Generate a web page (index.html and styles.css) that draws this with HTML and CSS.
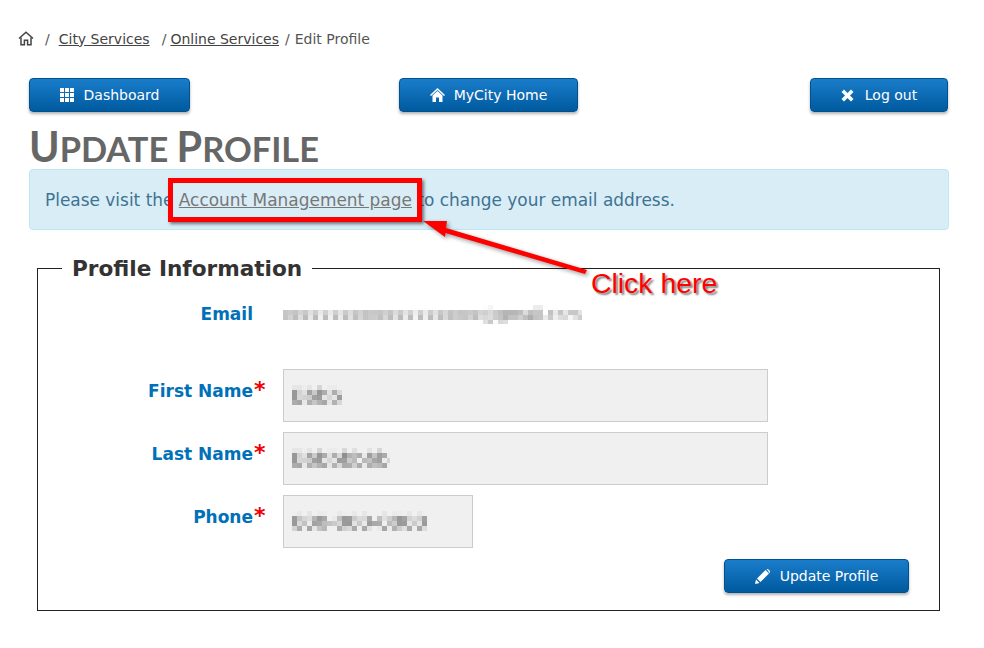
FILE: index.html
```html
<!DOCTYPE html>
<html lang="en">
<head>
  <meta charset="UTF-8">
  <meta name="viewport" content="width=device-width, initial-scale=1.0">
  <title>Update Profile</title>
  <link rel="stylesheet" href="styles.css">
</head>
<body>

  <!-- pixelates the hidden values -->
  <svg class="defs" width="0" height="0">
    <filter id="mosaic" x="0" y="0" width="1" height="1">
      <feGaussianBlur in="SourceGraphic" stdDeviation="1.2" result="soft"/>
      <feFlood x="2" y="2" width="1" height="1"/>
      <feComposite width="5" height="5"/>
      <feTile result="grid"/>
      <feComposite in="soft" in2="grid" operator="in"/>
      <feMorphology operator="dilate" radius="2"/>
    </filter>
  </svg>

  <nav class="breadcrumb">
    <svg class="crumb-home" width="16" height="15" viewBox="0 0 16 15" fill="none" stroke="#444" stroke-width="1.5">
      <path d="M1 7.5 8 1.2l7 6.3"/>
      <path d="M3 6.5v7.3h3.4V9.2h3.2v4.6H13V6.5"/>
    </svg>
    <span class="sep sep-first">/</span>
    <a href="#">City Services</a>
    <span class="sep sep-second">/</span><a href="#">Online Services</a>
    <span class="sep sep-third">/</span><span>Edit Profile</span>
  </nav>

  <div class="top-buttons">
    <a class="btn btn-dashboard" href="#">
      <svg width="14" height="14" viewBox="0 0 14 14" fill="#fff">
        <rect x="0" y="0" width="4" height="4"/><rect x="5" y="0" width="4" height="4"/><rect x="10" y="0" width="4" height="4"/>
        <rect x="0" y="5" width="4" height="4"/><rect x="5" y="5" width="4" height="4"/><rect x="10" y="5" width="4" height="4"/>
        <rect x="0" y="10" width="4" height="4"/><rect x="5" y="10" width="4" height="4"/><rect x="10" y="10" width="4" height="4"/>
      </svg>
      Dashboard
    </a>
    <a class="btn btn-home" href="#">
      <svg width="15" height="14" viewBox="0 0 15 14" fill="#fff">
        <path d="M7.500 0 15 7l-1 1.100-6.500-6-6.500 6L0 7z"/>
        <path d="M2.500 7.500 7.500 3l5 4.500V14H9V9.500H6V14H2.500z"/>
      </svg>
      MyCity Home
    </a>
    <a class="btn btn-logout" href="#">
      <svg width="13" height="13" viewBox="0 0 13 13" fill="#fff">
        <path d="M3 .5 6.500 4 10 .5 12.500 3 9 6.500l3.500 3.500-2.500 2.500L6.500 9 3 12.500.5 10 4 6.500.5 3z"/>
      </svg>
      Log out
    </a>
  </div>

  <h1 class="page-title"><span class="cap">U</span>pdate <span class="cap">P</span>rofile</h1>

  <div class="alert">
    Please visit the <a href="#">Account Management page</a> to change your email address.
  </div>

  <fieldset class="profile">
    <legend>Profile Information</legend>

    <div class="row row-email">
      <label>Email</label>
      <span class="blurred blurred-email">xxxxxxxxxxxxxxxxxxxxx@gmail.com</span>
    </div>

    <div class="row">
      <label>First Name<span class="star">*</span></label>
      <div class="field"><span class="blurred">Bbbb</span></div>
    </div>

    <div class="row">
      <label>Last Name<span class="star">*</span></label>
      <div class="field"><span class="blurred">Bbbbbbbb</span></div>
    </div>

    <div class="row">
      <label>Phone<span class="star">*</span></label>
      <div class="field field-short"><span class="blurred">000-000-0000</span></div>
    </div>

    <div class="form-actions">
      <a class="btn btn-update" href="#">
        <svg width="16" height="15" viewBox="0 0 16 15" fill="#fff">
          <path d="M0 15l1-4.500 3.500 3.500z"/>
          <path d="M2 9.500 10.500 1l3.500 3.500L5.500 13z"/>
          <path d="M11.500 0 13 0l2 2 0 1.500-.5.500L12 .5z"/>
        </svg>
        Update Profile
      </a>
    </div>
  </fieldset>

  <!-- red markup drawn on top of the screenshot -->
  <div class="mark-box"></div>
  <svg class="mark-arrow" width="180" height="70" viewBox="0 0 180 70">
    <path d="M1 2 25 2 24 9 165 51 163 55 23.500 14 23 18z" fill="#f00"/>
  </svg>
  <div class="mark-text">Click here</div>

</body>
</html>
```
FILE: styles.css
```css
* {
  box-sizing: border-box;
}

body {
  margin: 0;
  padding: 0 35px 0 29px;
  font-family: "DejaVu Sans", Verdana, sans-serif;
  background-color: #fff;
  color: #555;
}

a {
  color: inherit;
}

.defs {
  position: absolute;
}

/* Breadcrumb */
.breadcrumb {
  display: flex;
  align-items: center;
  height: 17px;
  margin: 30px 0 0 -11px;
  font-size: 14px;
  white-space: pre;
}

.breadcrumb a {
  color: #444;
}

.crumb-home {
  margin-right: 11px;
}

.sep-first {
  margin-right: 9px;
}

.sep-second {
  margin: 0 4px 0 12px;
}

.sep-third {
  margin: 0 5px 0 6px;
}

/* Buttons */
.top-buttons {
  display: flex;
  justify-content: space-between;
  margin: 31px 0 0;
  padding-right: 1px;
}

.btn {
  display: inline-flex;
  align-items: center;
  justify-content: center;
  height: 34px;
  border: 1px solid #00528f;
  border-radius: 4px;
  background: linear-gradient(#1a7dcb, #005a9e);
  box-shadow: 0 2px 3px rgba(0, 0, 0, 0.3);
  color: #fff;
  font-size: 14px;
  text-decoration: none;
}

.btn-dashboard {
  width: 161px;
  gap: 10px;
}

.btn-home {
  width: 179px;
  gap: 9px;
  margin-right: 23px;
}

.btn-logout {
  width: 138px;
  gap: 11px;
}

.btn-update {
  width: 185px;
  gap: 9px;
}

/* Heading */
.page-title {
  margin: 11px 0 0;
  height: 46px;
  font-family: Lato, sans-serif;
  font-size: 34.400px;
  line-height: 47px;
  font-weight: 700;
  text-transform: uppercase;
  color: #666;
}

.page-title .cap {
  font-size: 41.300px;
}

.alert {
  height: 61px;
  padding: 0 15px;
  border: 1px solid #bce8f1;
  border-radius: 4px;
  background-color: #d9edf7;
  color: #3f7392;
  font-size: 16.950px;
  line-height: 60px;
}

.alert a {
  color: #777;
}

/* Form */
.profile {
  width: 903px;
  height: 357px;
  margin: 24px 8px 0;
  padding: 0;
  border: 1px solid #222;
}

.profile legend {
  margin-left: 24px;
  padding: 2px 10px 0;
  font-size: 21.600px;
  font-weight: 700;
  line-height: 26px;
  color: #333;
}

.row {
  display: flex;
  align-items: center;
  margin-top: 10px;
}

.row label {
  position: relative;
  width: 215px;
  padding-bottom: 10px;
  text-align: right;
  font-size: 17px;
  font-weight: 700;
  color: #0070b8;
}

.row-email {
  height: 28px;
  margin: 18px 0 41px;
}

.row-email label {
  padding-bottom: 0;
}

.star {
  position: absolute;
  left: 100%;
  top: -4px;
  margin-left: 1px;
  color: #e00;
  font-size: 22px;
}

.row .field,
.row .blurred-email {
  margin-left: 30px;
}

.field {
  display: flex;
  align-items: center;
  width: 485px;
  height: 53px;
  padding: 0 8px;
  border: 1px solid #ccc;
  background-color: #f0f0f0;
}

.field-short {
  width: 190px;
}

.blurred {
  color: #555;
  font-size: 19px;
  filter: url(#mosaic);
}

.blurred-email {
  color: #777;
  font-size: 16px;
}

.form-actions {
  display: flex;
  justify-content: flex-end;
  margin: 11px 30px 0 0;
}

/* Markup over the screenshot */
.mark-box {
  position: absolute;
  left: 168px;
  top: 178px;
  width: 254px;
  height: 44px;
  border: 5px solid #f00;
  box-shadow: 2px 2px 3px rgba(0, 0, 0, 0.5);
}

.mark-arrow {
  position: absolute;
  left: 422px;
  top: 219px;
  filter: drop-shadow(2px 2px 2px rgba(0, 0, 0, 0.4));
}

.mark-text {
  position: absolute;
  left: 591px;
  top: 266px;
  font-family: "Liberation Sans", Arial, sans-serif;
  font-size: 28.400px;
  line-height: 34px;
  color: #f00;
  text-shadow: 2px 2px 2px rgba(0, 0, 0, 0.5);
}
```
